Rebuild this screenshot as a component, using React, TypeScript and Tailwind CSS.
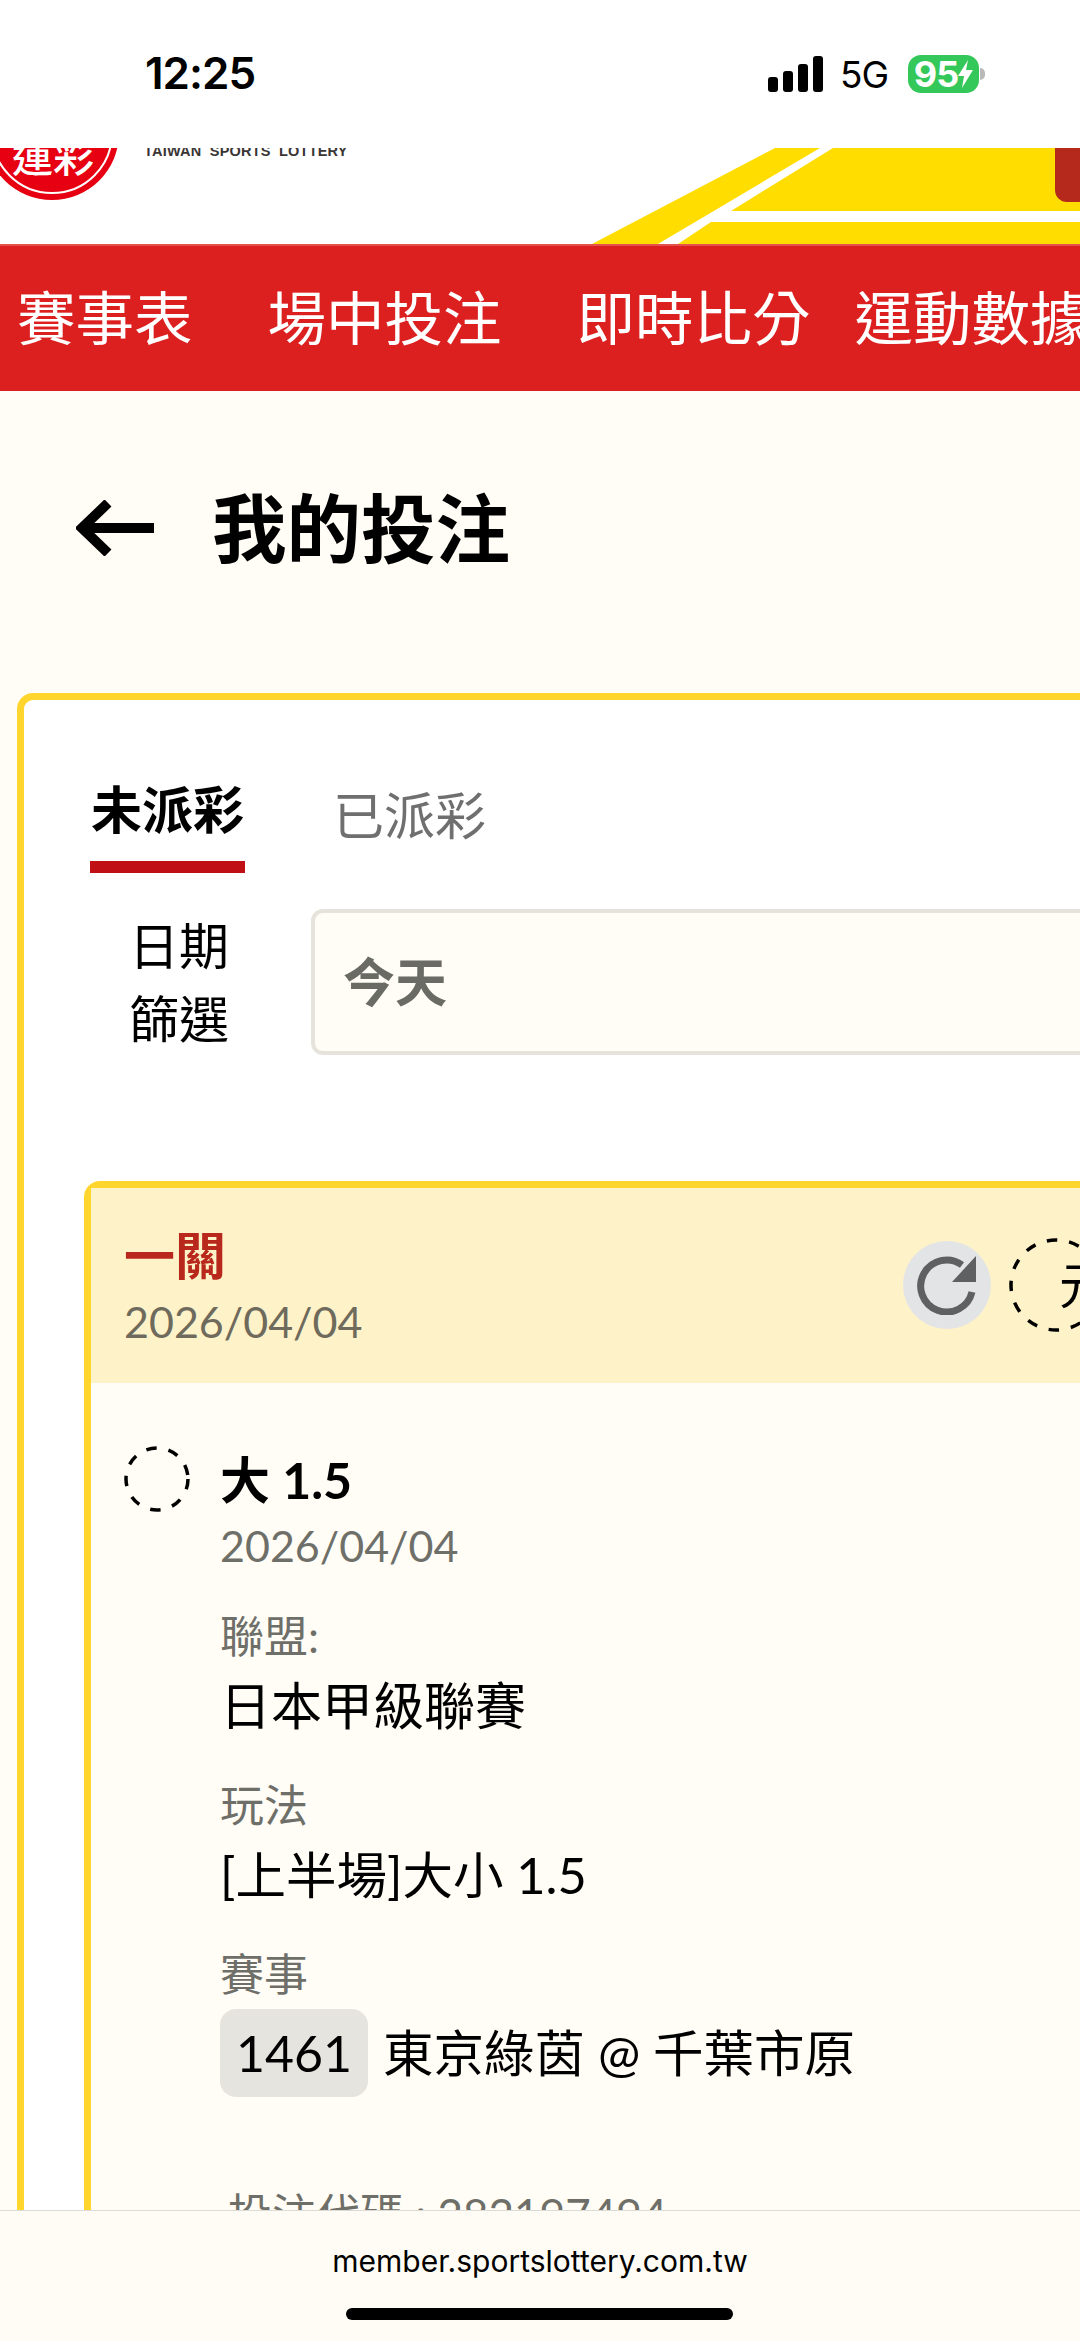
const cjk = "font-['Lato','Noto_Sans_CJK_TC',sans-serif]";

function StatusBar() {
  return (
    <div className="relative z-10 flex h-[148px] items-center justify-between bg-white pl-[145px] pr-[95px]">
      <span className="-mt-[2px] font-['Inter',sans-serif] text-[44px] font-semibold leading-none tracking-[-1px] text-black">12:25</span>
      <div className="flex items-center">
        <svg width="55" height="36" viewBox="0 0 55 36" className="fill-black">
          <rect x="0" y="21" width="10" height="15" rx="3" />
          <rect x="15" y="15" width="10" height="21" rx="3" />
          <rect x="30" y="8" width="10" height="28" rx="3" />
          <rect x="45" y="0" width="10" height="36" rx="3" />
        </svg>
        <span className="ml-[17px] font-['Inter',sans-serif] text-[37px] font-normal leading-none tracking-[-1px] text-black">5G</span>
        <div className="ml-[20px] flex h-[38px] w-[71px] items-center justify-center rounded-[13px] bg-[#34c759]">
          <span className="font-['Inter',sans-serif] text-[36px] font-bold leading-none tracking-[-1px] text-white">95</span>
          <svg width="15" height="30" viewBox="0 0 15 28" className="fill-white">
            <path d="M10 0 L0 16 H6 L4 28 L15 10 H8 Z" />
          </svg>
        </div>
        <div className="ml-[1px] h-[12px] w-[5px] rounded-r-full bg-[#b9b9b9]" />
      </div>
    </div>
  );
}

function Banner() {
  return (
    <div className="relative h-[96px] overflow-hidden bg-white">
      <svg width="1080" height="96" viewBox="0 148 1080 96" className="absolute inset-0">
        <polygon points="775,148 820,148 658,244 592,244" fill="#ffdd00" />
        <polygon points="833,148 1080,148 1080,211 731,211" fill="#ffdd00" />
        <polygon points="711,222 1080,222 1080,244 678,244" fill="#ffdd00" />
        <circle cx="52" cy="133" r="67" fill="#e60012" />
        <circle cx="52" cy="133" r="60" fill="none" stroke="#ffffff" strokeWidth="2" />
        <text x="12" y="172" fontSize="41" fontFamily="'Noto Sans CJK TC', sans-serif" fontWeight="500" fill="#ffffff">運彩</text>
      </svg>
      <span className="absolute -top-[5px] left-[144px] whitespace-pre font-['Liberation_Sans',sans-serif] text-[14.5px] font-bold leading-[16px] tracking-[0.2px] text-[#3a3535]">TAIWAN  SPORTS  LOTTERY</span>
      <div className="absolute right-0 top-0 h-[54px] w-[25px] rounded-bl-[12px] bg-[#b5281c]" />
    </div>
  );
}

function NavBar() {
  return (
    <div className="flex h-[147px] items-center overflow-hidden whitespace-nowrap border-t-2 border-[#e4504c] bg-[#dc1f1f] pb-[6px] pl-[17px] font-['Noto_Sans_CJK_TC',sans-serif] text-[58.5px] leading-none text-white">
      <span>賽事表</span>
      <span className="ml-[75px]">場中投注</span>
      <span className="ml-[75px]">即時比分</span>
      <span className="ml-[44px]">運動數據</span>
    </div>
  );
}

function Field({ label, children }: { label: string; children: React.ReactNode }) {
  return (
    <div className="mb-[35px]">
      <div className="text-[44px] leading-[60px] text-[#6f6f6a]">{label}</div>
      <div className="mt-[6px]">{children}</div>
    </div>
  );
}

function DashedRing({ size }: { size: number }) {
  const r = size / 2 - 2;
  return (
    <svg width={size} height={size} viewBox={`0 0 ${size} ${size}`} className="shrink-0">
      <circle cx={size / 2} cy={size / 2} r={r} fill="none" stroke="#000000" strokeWidth="3.5" strokeDasharray="10.5 12" />
    </svg>
  );
}

export default function App() {
  return (
    <div className={`relative h-[2341px] w-[1080px] overflow-hidden bg-[#fffdf5] ${cjk}`}>
      <StatusBar />
      <Banner />
      <NavBar />

      <div className="flex items-center pl-[76px] pt-[101px]">
        <svg width="78" height="56" viewBox="0 0 78 56" fill="none" stroke="#000000" strokeWidth="10">
          <path d="M78 28 H6" />
          <path d="M32 3 L6 28 L32 53" />
        </svg>
        <h1 className="ml-[58px] text-[74.5px] font-bold leading-[72px] text-black">我的投注</h1>
      </div>

      <div className="ml-[17px] mr-[-120px] mt-[129px] rounded-tl-[16px] border-[7px] border-[#ffd52e] bg-white pb-[300px] pl-[66px] pt-[76px]">
        <div className="flex">
          <div className="flex w-[155px] flex-col items-center">
            <span className="text-[51px] font-bold leading-[68px] text-black">未派彩</span>
            <div className="mt-[17px] h-[12px] w-full bg-[#c01015]" />
          </div>
          <span className="ml-[88px] mt-[6px] text-[51px] leading-[68px] text-[#6f6f6f]">已派彩</span>
        </div>

        <div className="mt-[37px] flex">
          <div className="ml-[39px] w-[100px] text-center text-[50px] leading-[73px] text-black">日期<br />篩選</div>
          <div className="-mt-[1px] ml-[82px] flex h-[146px] flex-1 items-center rounded-l-[12px] border-4 border-[#e6e3dc] bg-[#fffdf6] pl-[28px]">
            <span className="text-[52px] font-bold leading-none text-[#6b6b66]">今天</span>
          </div>
        </div>

        <div className="-ml-[6px] mt-[125px] rounded-tl-[16px] border-[7px] border-b-0 border-r-0 border-[#ffd52e] bg-[#fffdf5]">
          <div className="flex h-[195px] items-start justify-between bg-[#fef2c8] pl-[33px] pt-[38px]">
            <div>
              <div className="text-[51px] font-bold leading-[60px] text-[#b9281c]">一關</div>
              <div className="mt-[6px] text-[43px] leading-[60px] text-[#6e6a5c]">2026/04/04</div>
            </div>
            <div className="flex items-center pr-[34px] pt-[12px]">
              <div className="flex h-[88px] w-[88px] items-center justify-center rounded-full bg-[#e3e4e6]">
                <svg width="60" height="60" viewBox="0 0 60 60" fill="none">
                  <path d="M55 37 A26 26 0 1 1 45 10" stroke="#5f6062" strokeWidth="7" />
                  <path d="M59 1 V27 H35 Z" fill="#5f6062" />
                </svg>
              </div>
              <div className="relative ml-[18px] flex h-[94px] w-[150px] items-center pl-[50px] text-[50px] leading-none text-black">
                <span className="absolute left-0 top-0">
                  <DashedRing size={94} />
                </span>
                <span className="relative">元</span>
              </div>
            </div>
          </div>

          <div className="flex pl-[33px] pt-[63px]">
            <DashedRing size={66} />
            <div className="ml-[30px] pt-[4px]">
              <div className="text-[50px] font-bold leading-[60px] text-black">大 1.5</div>
              <div className="mb-[32px] mt-[8px] text-[43px] leading-[56px] text-[#6f6f6a]">2026/04/04</div>
              <Field label="聯盟:">
                <div className="text-[51px] leading-[68px] text-black">日本甲級聯賽</div>
              </Field>
              <Field label="玩法">
                <div className="text-[50.5px] leading-[68px] text-black">[上半場]大小 1.5</div>
              </Field>
              <div className="text-[44px] leading-[60px] text-[#6f6f6a]">賽事</div>
              <div className="mt-[5px] flex items-center">
                <span className="flex h-[88px] w-[148px] items-center justify-center rounded-[16px] bg-[#e6e4df] text-[50px] leading-none text-black">1461</span>
                <span className="ml-[15px] text-[50.5px] leading-none text-black">東京綠茵 @ 千葉市原</span>
              </div>
              <div className="mt-[87px] pl-[8px] text-[44px] leading-[60px] text-[#6f6f6a]">投注代碼 : 282197494</div>
            </div>
          </div>
        </div>
      </div>

      <div className="absolute bottom-0 left-0 right-0 h-[131px] border-t border-[#dddbd5] bg-[#fefcf5]">
        <div className="pt-[32px] text-center font-['Inter',sans-serif] text-[30px] leading-[36px] text-black">member.sportslottery.com.tw</div>
        <div className="absolute bottom-[21px] left-[346px] h-[12px] w-[387px] rounded-full bg-black" />
      </div>
    </div>
  );
}
